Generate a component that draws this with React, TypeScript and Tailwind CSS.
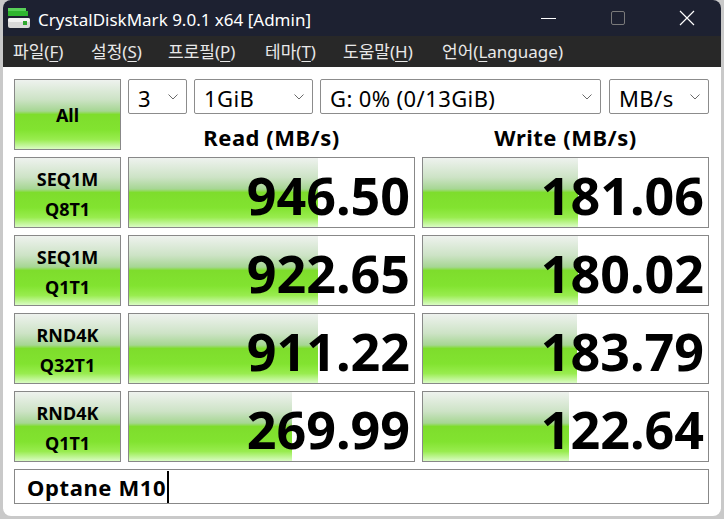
import React from "react";

const GRAD =
  "bg-[linear-gradient(to_bottom,#eef2ee_0%,#cde3c6_28%,#a6d693_45%,#7edd2c_50%,#82e330_72%,#98ec4e_86%,#dafcc4_100%)]";

const rows = [
  { l1: "SEQ1M", l2: "Q8T1", r: "946.50", w: "181.06", rp: 189, wp: 155 },
  { l1: "SEQ1M", l2: "Q1T1", r: "922.65", w: "180.02", rp: 189, wp: 155 },
  { l1: "RND4K", l2: "Q32T1", r: "911.22", w: "183.79", rp: 189, wp: 154 },
  { l1: "RND4K", l2: "Q1T1", r: "269.99", w: "122.64", rp: 163, wp: 146 },
];

const SANS = "font-['Noto_Sans','Noto_Sans_CJK_KR',sans-serif]";

function Chevron() {
  return (
    <svg width="10" height="6" viewBox="0 0 10 6" className="shrink-0">
      <path d="M0.5 0.5 L5 5 L9.5 0.5" fill="none" stroke="#6a6a6a" strokeWidth="1" />
    </svg>
  );
}

function Select({ text, w }: { text: string; w: string }) {
  return (
    <div
      className={`${w} h-[35px] border border-[#8c8c8c] rounded-[2px] bg-white flex items-center justify-between pl-[9px] pr-[8px]`}
    >
      <span className="text-[22px] tracking-[0.4px] leading-[26px] pt-[3px] text-black whitespace-nowrap">
        {text}
      </span>
      <Chevron />
    </div>
  );
}

function ValueBox({ value, pct }: { value: string; pct: number }) {
  return (
    <div className="relative w-[287px] h-[71px] border border-[#888888] bg-white flex justify-end items-start pr-[4px] pt-[7px]">
      <div className={`absolute left-0 top-0 bottom-0 ${GRAD}`} style={{ width: pct }} />
      <span className="relative text-[52px] font-bold leading-[60px] text-black whitespace-nowrap">
        {value}
      </span>
    </div>
  );
}

function U({ c }: { c: string }) {
  return <span className="underline underline-offset-[3px] decoration-1">{c}</span>;
}

export default function App() {
  return (
    <div className={`w-[724px] h-[519px] bg-[#c9c9c9] overflow-hidden ${SANS}`}>
      <div className="ml-[3px] w-[718px] h-[516px] rounded-[8px] bg-white flex flex-col overflow-hidden">
        {/* title bar */}
        <div className="h-[36px] bg-[#1d2131] flex items-center shrink-0">
          <svg width="24" height="22" viewBox="0 0 24 22" className="ml-[3px] mr-[8px]">
            <rect x="2" y="1" width="18" height="3" fill="#58d058" />
            <rect x="2" y="4" width="20" height="5" fill="#2fb52f" />
            <rect x="2" y="11" width="22" height="10" rx="2" fill="#d9d9d9" />
            <rect x="2" y="11" width="22" height="4" rx="2" fill="#f2f2f2" />
            <rect x="17" y="14" width="4" height="4" fill="#2fa82f" />
          </svg>
          <span className="text-[17px] text-white leading-[22px] pt-[3px]">
            CrystalDiskMark 9.0.1 x64 [Admin]
          </span>
          <div className="flex-1" />
          <div className="w-[69px] h-[36px] flex items-center justify-center">
            <div className="w-[15px] h-[1px] bg-white" />
          </div>
          <div className="w-[70px] h-[36px] flex items-center justify-center">
            <div className="w-[14px] h-[14px] border border-[#7a7a7a] rounded-[2px]" />
          </div>
          <div className="w-[68px] h-[36px] flex items-center justify-center">
            <svg width="16" height="16" viewBox="0 0 16 16">
              <path d="M1 1 L15 15 M15 1 L1 15" stroke="#ffffff" strokeWidth="1.2" />
            </svg>
          </div>
        </div>
        {/* menu bar */}
        <div className="h-[31px] bg-[#282828] flex items-center pl-[10px] text-[17px] text-[#e8e8e8] shrink-0 leading-[22px]">
          <span className="w-[78px]">파일(<U c="F" />)</span>
          <span className="w-[77px]">설정(<U c="S" />)</span>
          <span className="w-[97px]">프로필(<U c="P" />)</span>
          <span className="w-[78px]">테마(<U c="T" />)</span>
          <span className="w-[99px]">도움말(<U c="H" />)</span>
          <span>언어(<U c="L" />anguage)</span>
        </div>
        {/* content */}
        <div className="flex flex-col gap-[7px] pl-[11px] pt-[12px]">
          <div className="flex gap-[7px] h-[71px]">
            <div
              className={`w-[107px] h-[71px] border border-[#888888] ${GRAD} flex items-center justify-center`}
            >
              <span className="text-[18px] font-bold text-black pt-[2px]">All</span>
            </div>
            <div className="flex flex-col w-[581px]">
              <div className="flex h-[35px]">
                <Select text="3" w="w-[59px]" />
                <div className="w-[7px]" />
                <Select text="1GiB" w="w-[119px]" />
                <div className="w-[7px]" />
                <Select text="G: 0% (0/13GiB)" w="w-[281px]" />
                <div className="w-[8px]" />
                <Select text="MB/s" w="w-[100px]" />
              </div>
              <div className="flex gap-[7px] h-[36px]">
                <div className="w-[287px] text-center text-[22px] tracking-[0.5px] font-bold leading-[26px] pt-[10px]">
                  Read (MB/s)
                </div>
                <div className="w-[287px] text-center text-[22px] tracking-[0.5px] font-bold leading-[26px] pt-[10px]">
                  Write (MB/s)
                </div>
              </div>
            </div>
          </div>
          {rows.map((r, i) => (
            <div key={i} className="flex gap-[7px] h-[71px]">
              <div
                className={`w-[107px] h-[71px] border border-[#888888] ${GRAD} flex flex-col items-center justify-center pt-[3px]`}
              >
                <span className="text-[18px] font-bold leading-[30px] text-black">{r.l1}</span>
                <span className="text-[18px] font-bold leading-[30px] text-black">{r.l2}</span>
              </div>
              <ValueBox value={r.r} pct={r.rp} />
              <ValueBox value={r.w} pct={r.wp} />
            </div>
          ))}
          <div className="w-[695px] h-[35px] border border-[#888888] bg-white flex items-center pl-[12px]">
            <span className="text-[22px] tracking-[0.6px] font-bold leading-[28px] text-black pt-[1px]">
              Optane M10
            </span>
            <div className="w-[2px] h-[32px] bg-black ml-[1px]" />
          </div>
        </div>
      </div>
    </div>
  );
}
